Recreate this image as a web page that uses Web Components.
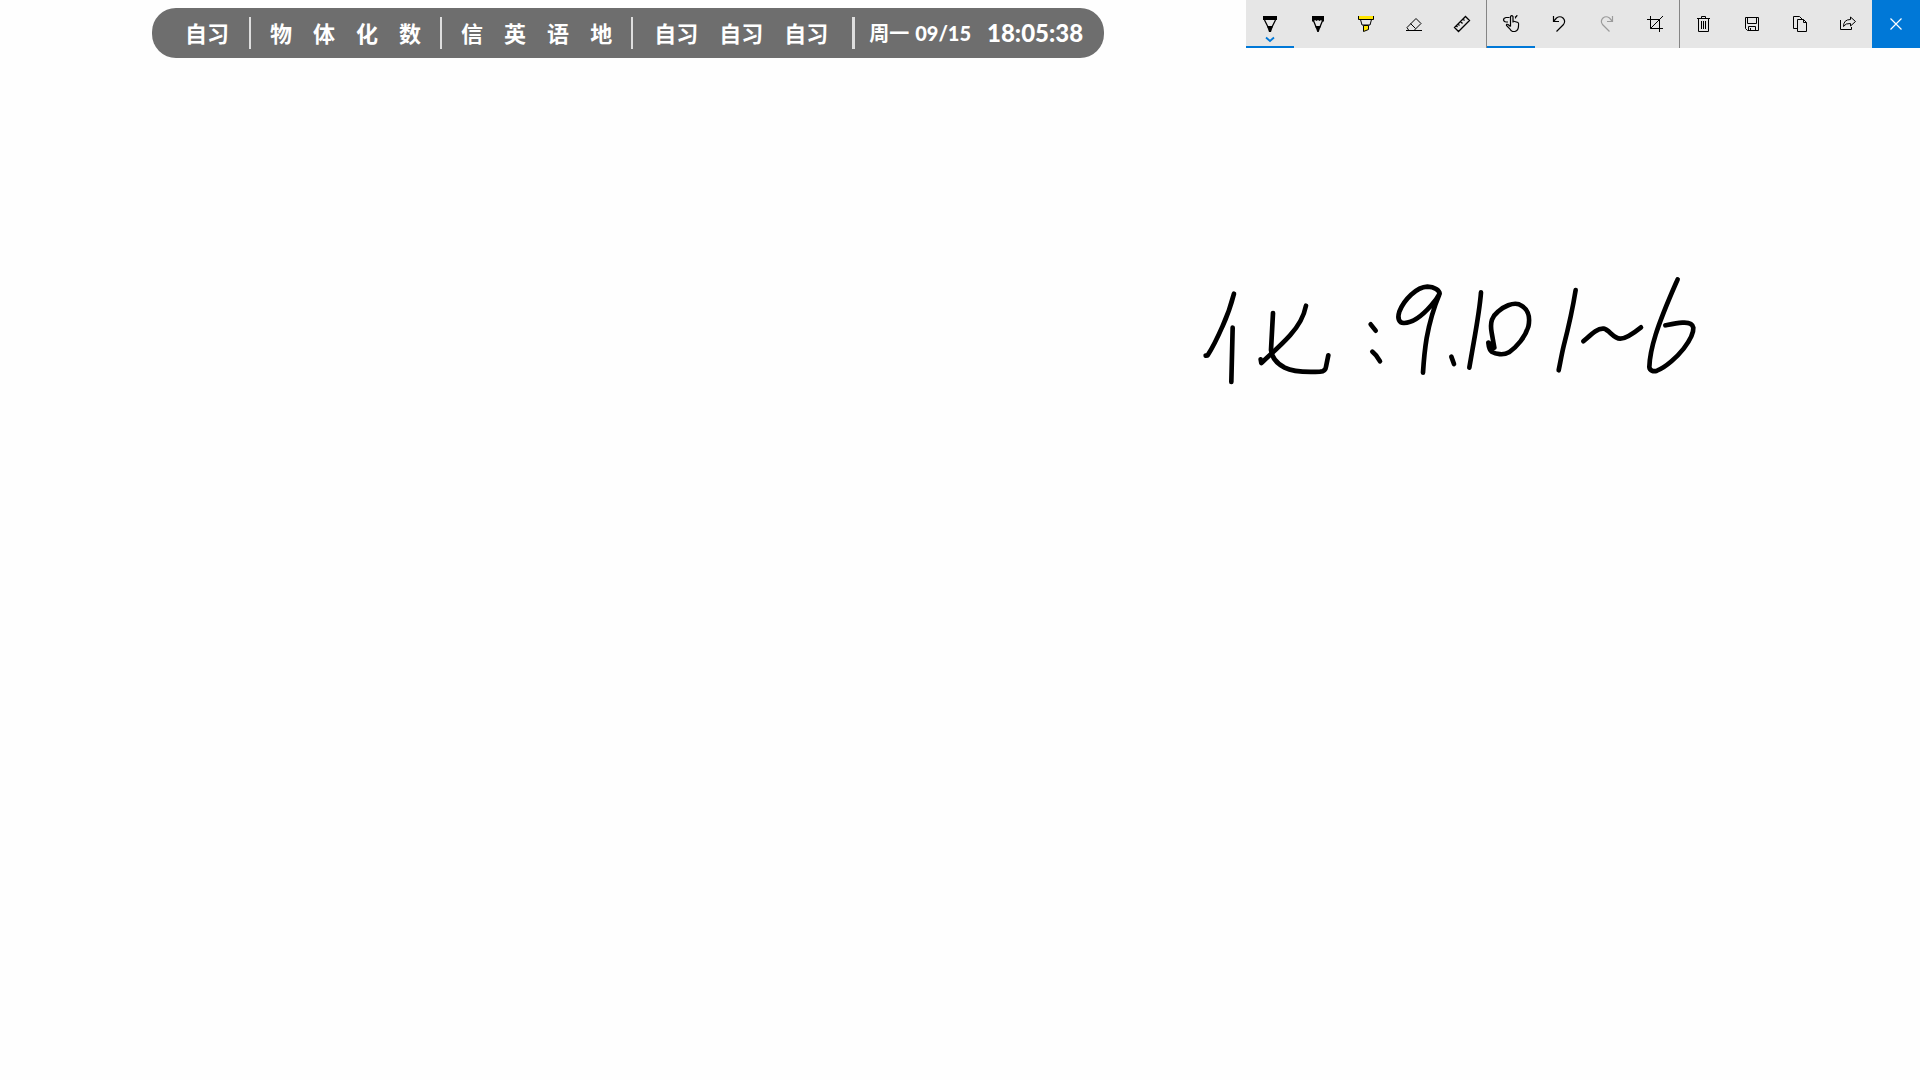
<!DOCTYPE html>
<html lang="zh-CN">
<head>
<meta charset="utf-8">
<title>课表白板</title>
<style>
  html, body { margin: 0; height: 100%; background: #fefefe; overflow: hidden; }
</style>
</head>
<body>
<white-board></white-board>

<script>
const ICONS = {
  pen: '<path d="M18.5 20 L22.5 28 M29.5 20 L25.5 28" stroke-width="1.3"/><path class="f" d="M17 16h14v4H17z M21 26h6l-2 6h-2z"/><path d="M20 37.5 L24 41 L28 37.5" stroke="#0078d7" stroke-width="1.8"/>',
  pencil: '<path d="M19 19.5 L22.5 28 M29 19.5 L25.5 28" stroke-width="1.3"/><path class="f" d="M18 16h12v5.5h-1.5L27 20l-1.500 1L24 20l-1.500 1L21 20l-1.500 1.500H18z M21.200 26h5.600L24.700 32h-1.400z"/>',
  marker: '<path class="f" style="fill:#ffe500" d="M16 16h16v3.500H16z"/><path d="M16.500 16v3.500h15V16 M18.500 19.500l1.500 5.500h8l1.500-5.500"/><path d="M21.500 25.500v6l5-2v-4z" style="fill:#ffe500"/>',
  eraser: '<path d="M16 30.500h16 M18.500 30L17 27.500L26 18.500L31 23.500L24.500 30 M20.500 23.500L25.500 28.500"/>',
  ruler: '<path d="M27.500 16.500L31.500 20.500L20.500 31.500L16.500 27.500z M25 19l1.500 1.500 M22.500 21.500l2 2 M20 24l1.500 1.500 M18.500 26l1 1" stroke-width="1.300"/>',
  touch: '<path d="M23.500 26.500V16.500Q24.700 14.600 26 16.500V22.500 M26 21L31 22.500Q32 23 31.500 26Q31.500 30.500 28 31.500H25.500Q24 31 22.500 28.500L19.500 25.500Q19.200 23.700 21 24.500L23.500 26.500 M22.500 17.500H19Q16.500 18 16.500 20Q17 22 19 22H21 M28 16.500q1.500 1.500 2-1.500 M28 18h1" stroke-width="1.200"/>',
  undo: '<path d="M18.500 16v5.500H24 M18.500 21.500L21.500 18Q25 15.500 28 18Q31 21 28.500 24.500L21.500 31.500" stroke-width="1.200"/>',
  redo: '<path d="M29.500 16v5.500H24 M29.500 21.500L26.500 18Q23 15.500 20 18Q17 21 19.500 24.500L26.500 31.500" stroke-width="1.200" stroke="#9b9b9b"/>',
  crop: '<path d="M16 19.500h12.500V32 M19.500 16v12.500H32 M19.500 28.500L32 16"/>',
  trash: '<path d="M17 18.500h13 M21.500 18.500v-2h4v2 M18.500 18.500v13h10v-13 M21.500 21v8 M23.500 21v8 M25.500 21v8"/>',
  save: '<path d="M17.500 17.500h13v13h-11l-2-2z M19.500 17.500v6h9v-6 M20.500 30.500v-4h7v4 M22.500 28v2.500"/>',
  copy: '<path d="M21.500 19.500h6l3 3v9h-9z M27.500 19.500v3h3 M21.500 28.500h-4v-12h6l3 3"/>',
  share: '<path d="M16.500 20v9.500h11v-2.500 M19.500 26.500Q19.500 19.500 26.500 19.500V17L31.500 21.500L26.500 26V23.500Q21.500 23 19.500 26.500z"/>',
  close: '<path d="M18.500 18.500l11 11 M29.500 18.500l-11 11" stroke="#fff" stroke-width="1.200"/>'
};

// One toolbar button: icon, active underline, disabled and accent looks.
customElements.define('ink-tool', class extends HTMLElement {
  connectedCallback() {
    this.attachShadow({ mode: 'open' }).innerHTML = `
      <style>
        :host { display: block; width: 48px; height: 48px; }
        :host([accent]) { background: #0078d7; }
        button { display: block; box-sizing: border-box; width: 100%; height: 100%; margin: 0; padding: 0; border: 0; background: none; }
        :host([active]) button { box-shadow: inset 0 -2px #0078d7; }
        svg { display: block; width: 48px; height: 48px; fill: none; stroke: #000; stroke-width: 1; }
        .f { fill: #000; stroke: none; }
      </style>
      <button type="button" aria-label="${this.getAttribute('label')}">
        <svg viewBox="0 0 48 48" aria-hidden="true">${ICONS[this.getAttribute('icon')]}</svg>
      </button>`;
    this.shadowRoot.querySelector('button').disabled = this.hasAttribute('disabled');
  }
});

customElements.define('ink-toolbar', class extends HTMLElement {
  connectedCallback() {
    this.attachShadow({ mode: 'open' }).innerHTML = `
      <style>
        :host { display: flex; height: 48px; background: #e6e6e6; }
        ::slotted(hr) { width: 1px; height: 48px; margin: 0; border: 0; background: #858585; }
      </style>
      <slot></slot>`;
  }
});

// A run of lessons in the timetable strip.
customElements.define('lesson-group', class extends HTMLElement {
  connectedCallback() {
    this.attachShadow({ mode: 'open' }).innerHTML = `
      <style>
        :host { display: flex; align-items: center; gap: 21px; padding: 0 19px 2px; font-size: 22px; line-height: 32px; }
        :host([wide]) { padding: 0 24px 2px 21px; }
        :host([first]) { padding: 0 20px 2px 33px; }
      </style>
      <slot></slot>`;
  }
});

customElements.define('class-strip', class extends HTMLElement {
  connectedCallback() {
    this.attachShadow({ mode: 'open' }).innerHTML = `
      <style>
        :host { display: flex; align-items: center; height: 50px; border-radius: 24px; background: #6e6e6e; color: #fff;
          font-family: "Noto Sans CJK SC", sans-serif; font-weight: 700; white-space: nowrap; }
        i { width: 2px; height: 32px; background: #dedede; }
        i.end { width: 3px; }
        .date, .clock { display: flex; align-items: center; line-height: 32px; }
        .date { gap: 6px; padding: 0 16px 0 14px; font-size: 20px; }
        .num { font-family: Lato, sans-serif; font-weight: 900; }
        .clock { padding-right: 21px; font-size: 24px; }
      </style>
      <lesson-group first><span>自习</span></lesson-group><i></i>
      <lesson-group><span>物</span><span>体</span><span>化</span><span>数</span></lesson-group><i></i>
      <lesson-group><span>信</span><span>英</span><span>语</span><span>地</span></lesson-group><i></i>
      <lesson-group wide><span>自习</span><span>自习</span><span>自习</span></lesson-group><i class="end"></i>
      <div class="date"><span>周一</span><time class="num">09/15</time></div>
      <time class="clock num">18:05:38</time>`;
  }
});

// Handwritten strokes on the free canvas.
customElements.define('ink-canvas', class extends HTMLElement {
  connectedCallback() {
    this.attachShadow({ mode: 'open' }).innerHTML = `
      <style>
        :host { display: block; }
        .sheet { display: block; width: 100%; }
        path { fill: none; stroke: #000; stroke-width: 14; stroke-linecap: round; stroke-linejoin: round; }
      </style>
      <svg class="sheet" viewBox="0 0 1920 1080" aria-hidden="true">
        <svg x="1190" y="260" width="270" height="140" viewBox="0 0 810 420">
          <path d="M132 101C120 148 110 172 97 200C83 232 67 264 53 286L47 287"/>
          <path d="M128 203L124 366"/>
          <path d="M249 159L243 270C245 292 260 310 284 323C308 335 352 337 390 335C402 334 407 329 408 320L415 286"/>
          <path d="M348 137C342 168 325 199 300 226C270 259 241 283 214 309L212 298"/>
          <path d="M542 193L557 212M547 275L559 287L570 304"/>
          <path d="M749 101C748 91 734 81 712 80C680 81 642 119 628 155C621 177 628 188 641 189C672 190 704 159 724 136C734 125 742 115 749 101C730 146 718 190 710 234C704 270 701 305 699 338"/>
          <path d="M784 290L792 312"/>
        </svg>
        <svg x="1440" y="260" width="270" height="140" viewBox="0 0 810 420">
          <path d="M123 97C119 150 107 214 98 265L88 323"/>
          <path d="M163 263L155 218C149 184 157 169 174 155C191 139 218 127 237 133C262 143 272 168 265 200C256 231 230 261 207 277C189 287 167 282 155 275C147 269 146 258 145 248M154 250L156 266"/>
          <path d="M407 90C399 140 386 200 371 258C365 283 361 307 356 331"/>
          <path d="M430 244C453 224 471 204 491 206C508 209 519 235 541 236C559 236 583 218 603 202"/>
          <path d="M713 58C688 115 666 164 647 224C636 259 629 290 628 321C629 333 641 335 651 332C679 321 712 290 731 266C750 241 761 216 760 203C757 189 740 187 727 188C709 189 691 193 676 196"/>
        </svg>
      </svg>`;
  }
});

customElements.define('white-board', class extends HTMLElement {
  connectedCallback() {
    this.attachShadow({ mode: 'open' }).innerHTML = `
      <style>
        :host { display: grid; grid-template: 100vh / 100%; background: #fefefe; overflow: hidden; }
        ink-canvas, header { grid-area: 1 / 1; }
        header { display: flex; justify-content: space-between; align-items: flex-start; align-self: start; z-index: 1; }
        class-strip { margin: 8px 0 0 152px; }
      </style>
      <ink-canvas></ink-canvas>
      <header>
        <class-strip></class-strip>
        <ink-toolbar role="toolbar">
          <ink-tool icon="pen" label="圆珠笔" active></ink-tool>
          <ink-tool icon="pencil" label="铅笔"></ink-tool>
          <ink-tool icon="marker" label="荧光笔"></ink-tool>
          <ink-tool icon="eraser" label="橡皮擦"></ink-tool>
          <ink-tool icon="ruler" label="标尺"></ink-tool>
          <hr>
          <ink-tool icon="touch" label="触摸书写" active></ink-tool>
          <ink-tool icon="undo" label="撤消"></ink-tool>
          <ink-tool icon="redo" label="恢复" disabled></ink-tool>
          <ink-tool icon="crop" label="裁剪"></ink-tool>
          <hr>
          <ink-tool icon="trash" label="全部清除"></ink-tool>
          <ink-tool icon="save" label="另存为"></ink-tool>
          <ink-tool icon="copy" label="复制"></ink-tool>
          <ink-tool icon="share" label="共享"></ink-tool>
          <ink-tool icon="close" label="关闭" accent></ink-tool>
        </ink-toolbar>
      </header>`;
  }
});
</script>
</body>
</html>
